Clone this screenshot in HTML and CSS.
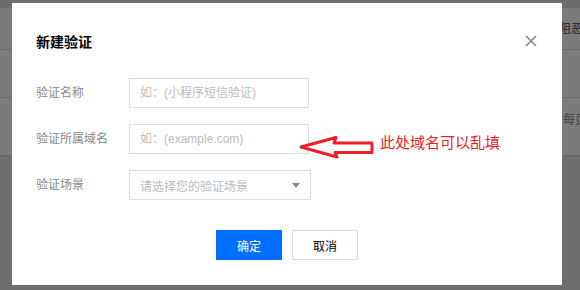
FILE: index.html
```html
<!DOCTYPE html>
<html lang="zh-CN">
  <head>
    <meta charset="UTF-8" />
    <meta name="viewport" content="width=device-width, initial-scale=1.0" />
    <title>新建验证</title>
    <link rel="stylesheet" href="styles.css">
  </head>
  <body>
    <!-- dimmed console page behind the dialog -->
    <div class="page">
      <div class="page-top"></div>
      <div class="page-table">
        <div class="page-row page-row-head"><span>阻恶意请求</span></div>
        <div class="page-row page-row-body"></div>
        <div class="page-row page-row-foot"><span>每页显示</span></div>
      </div>
    </div>

    <div class="dialog">
      <div class="dialog-header">
        <h2>新建验证</h2>
        <button class="dialog-close" type="button" aria-label="关闭">
          <svg width="12" height="12" viewBox="0 0 12 12">
            <path d="M1 1L11 11M11 1L1 11" stroke="#888" stroke-width="1.7" fill="none" />
          </svg>
        </button>
      </div>

      <div class="dialog-body">
        <div class="form-item">
          <label class="form-label">验证名称</label>
          <input class="form-input" type="text" placeholder="如：(小程序短信验证)" />
        </div>
        <div class="form-item">
          <label class="form-label">验证所属域名</label>
          <input class="form-input" type="text" placeholder="如：(example.com)" />
          <div class="annotation">
            <svg class="annotation-arrow" width="78" height="24" viewBox="0 0 78 24">
              <path
                d="M3 12 L38 2.5 L36 8 L74 8 L74 17.5 L37 17.5 L39 22 Z"
                fill="#fff"
                stroke="#e8202a"
                stroke-width="3"
                stroke-linejoin="round"
              />
            </svg>
            <span class="annotation-text">此处域名可以乱填</span>
          </div>
        </div>
        <div class="form-item">
          <label class="form-label">验证场景</label>
          <div class="form-select">
            <span>请选择您的验证场景</span>
            <i class="select-arrow"></i>
          </div>
        </div>
      </div>

      <div class="dialog-footer">
        <button class="btn btn-primary" type="button">确定</button>
        <button class="btn" type="button">取消</button>
      </div>
    </div>
  </body>
</html>
```

FILE: styles.css
```css
* {
  margin: 0;
  padding: 0;
  box-sizing: border-box;
}

body {
  font-family: "Liberation Sans", "Noto Sans CJK SC", sans-serif;
  background: #6e6e6e;
  color: #000;
  width: 580px;
  height: 290px;
  overflow: hidden;
  position: relative;
}

/* backdrop */
.page-top {
  height: 8px;
  background: #6c6c6c;
}

.page-table {
  background: #7b7b7b;
  border-bottom: 1px solid #676767;
}

.page-row {
  border-bottom: 1px solid #6a6a6a;
  display: flex;
  align-items: center;
  padding-left: 559px;
  white-space: nowrap;
  font-size: 12px;
}

.page-row:last-child {
  border-bottom: none;
}

.page-row-head {
  height: 42px;
  color: #222;
  padding-bottom: 3px;
}

.page-row-body {
  height: 48px;
}

.page-row-foot {
  height: 57px;
  color: #444;
  padding-left: 563px;
  padding-bottom: 16px;
}

/* dialog */
.dialog {
  position: absolute;
  left: 12px;
  top: 3px;
  width: 550px;
  height: 282px;
  background: #fff;
  padding: 29px 24px 0;
}

.dialog-header {
  display: flex;
  align-items: center;
  justify-content: space-between;
  height: 20px;
}

.dialog-header h2 {
  font-size: 14px;
  font-weight: 700;
  color: #000;
  line-height: 20px;
}

.dialog-close {
  border: none;
  background: none;
  width: 12px;
  height: 12px;
  display: flex;
  margin-right: 1px;
  margin-top: -2px;
  cursor: pointer;
}

.dialog-body {
  margin-top: 26px;
  display: flex;
  flex-direction: column;
  gap: 16px;
}

.form-item {
  display: flex;
  align-items: flex-start;
  height: 30px;
}

.form-label {
  width: 93px;
  font-size: 12px;
  line-height: 30px;
  color: #888;
}

.form-input {
  width: 180px;
  height: 30px;
  border: 1px solid #ddd;
  padding: 0 10px;
  font-family: inherit;
  font-size: 12px;
  color: #000;
  outline: none;
}

.form-input::placeholder {
  color: #bbb;
}

.form-select {
  width: 182px;
  height: 30px;
  border: 1px solid #ddd;
  padding: 0 10px;
  display: flex;
  align-items: center;
  justify-content: space-between;
  font-size: 12px;
  color: #bbb;
}

.select-arrow {
  width: 0;
  height: 0;
  border-left: 4px solid transparent;
  border-right: 4px solid transparent;
  border-top: 5px solid #888;
}

/* red hand-drawn note */
.annotation {
  display: flex;
  align-items: flex-start;
  margin-left: -11px;
}

.annotation-arrow {
  margin-top: 11px;
  flex-shrink: 0;
}

.annotation-text {
  margin-left: 4px;
  margin-top: 9px;
  font-size: 15px;
  line-height: 20px;
  color: #e8202a;
  white-space: nowrap;
}

.dialog-footer {
  margin-top: 30px;
  display: flex;
  justify-content: center;
  gap: 10px;
}

.btn {
  width: 66px;
  height: 30px;
  border: 1px solid #ddd;
  background: #fff;
  color: #000;
  font-family: inherit;
  font-size: 12px;
  cursor: pointer;
}

.btn-primary {
  background: #006eff;
  border-color: #006eff;
  color: #fff;
}
```
